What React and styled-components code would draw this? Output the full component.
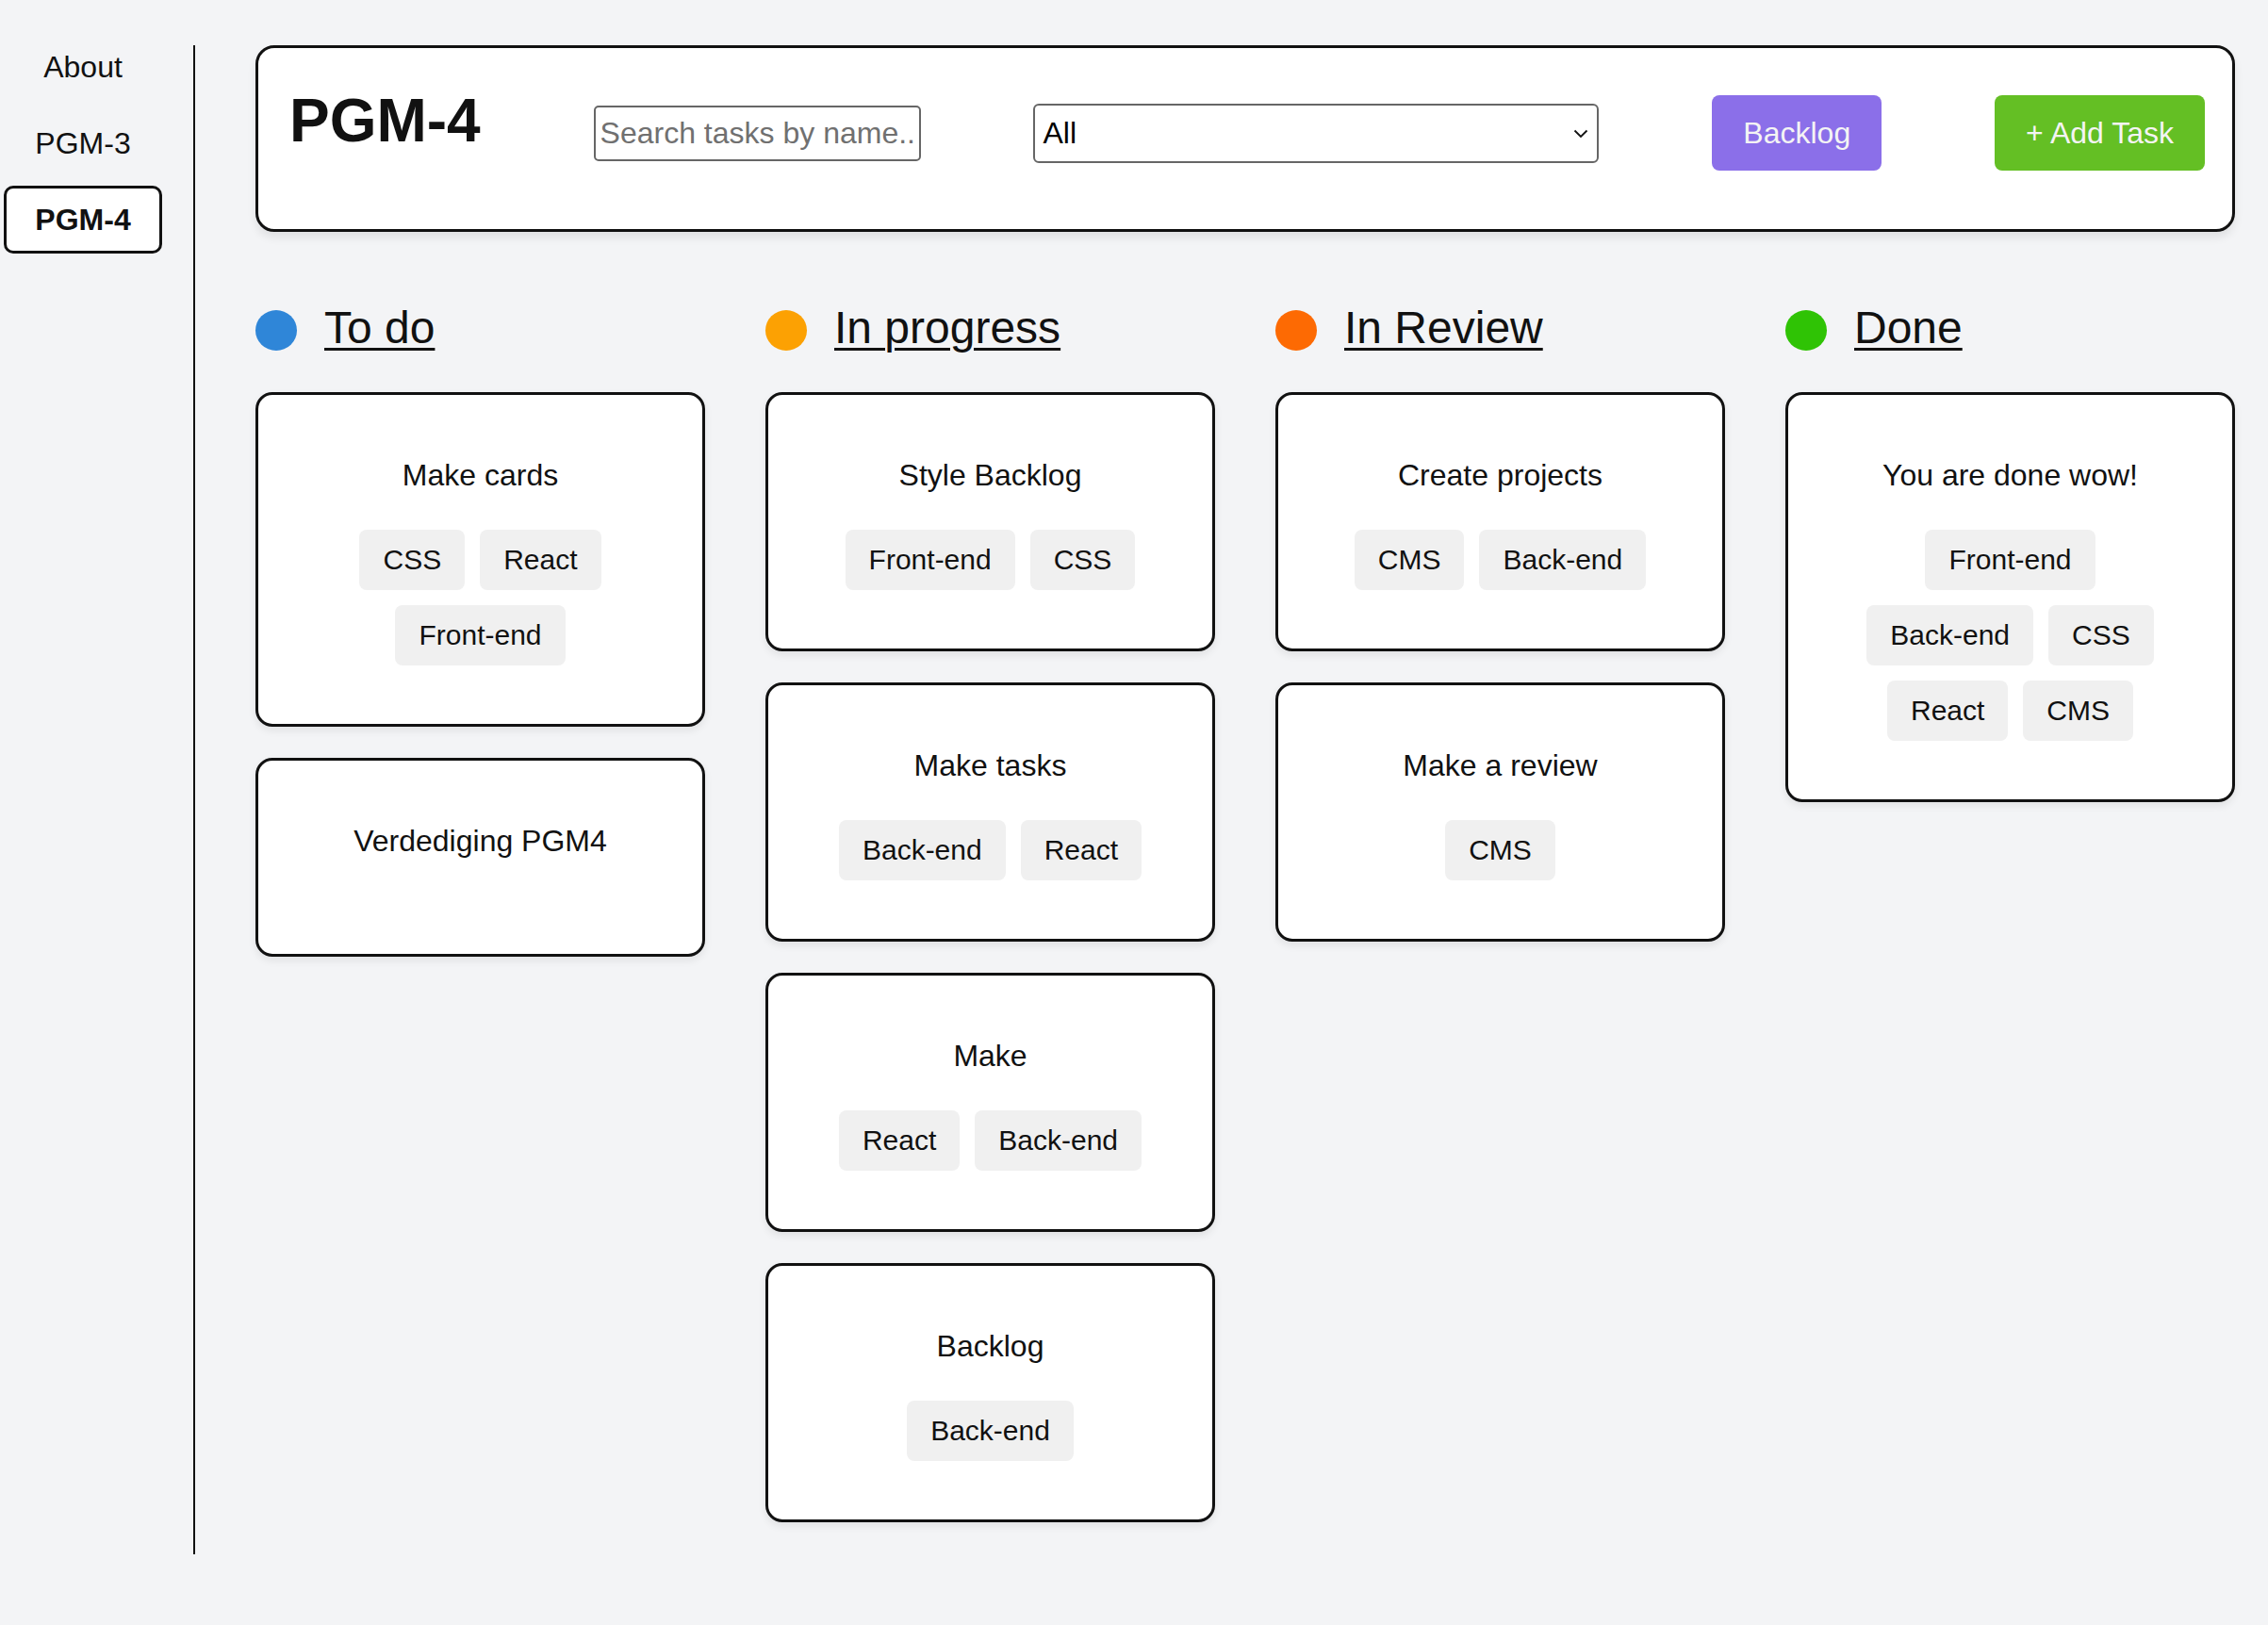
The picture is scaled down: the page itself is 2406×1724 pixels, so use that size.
import React from "react"
import styled, { createGlobalStyle } from "styled-components"

const GlobalStyle = createGlobalStyle`
  * { box-sizing: border-box; }
  body {
    margin: 0;
    background: #f3f4f6;
    color: #111;
    font-family: "Liberation Sans", Arial, sans-serif;
    font-size: 32px;
  }
`

const columns = [
  {
    title: "To do",
    color: "#2f86d8",
    tasks: [
      { name: "Make cards", tags: ["CSS", "React", "Front-end"] },
      { name: "Verdediging PGM4", tags: [] },
    ],
  },
  {
    title: "In progress",
    color: "#fca103",
    tasks: [
      { name: "Style Backlog", tags: ["Front-end", "CSS"] },
      { name: "Make tasks", tags: ["Back-end", "React"] },
      { name: "Make", tags: ["React", "Back-end"] },
      { name: "Backlog", tags: ["Back-end"] },
    ],
  },
  {
    title: "In Review",
    color: "#fd6a03",
    tasks: [
      { name: "Create projects", tags: ["CMS", "Back-end"] },
      { name: "Make a review", tags: ["CMS"] },
    ],
  },
  {
    title: "Done",
    color: "#2fc305",
    tasks: [
      { name: "You are done wow!", tags: ["Front-end", "Back-end", "CSS", "React", "CMS"] },
    ],
  },
]

const projects = ["About", "PGM-3", "PGM-4"]

export default function App() {
  return (
    <>
      <GlobalStyle />
      <Page>
        <SideNav>
          {projects.map((p) => (
            <NavItem key={p} $active={p === "PGM-4"}>{p}</NavItem>
          ))}
        </SideNav>
        <Divider />
        <Main>
          <Header>
            <Heading>PGM-4</Heading>
            <Search placeholder="Search tasks by name.." />
            <SelectWrap>
              <Select defaultValue="All">
                <option>All</option>
                <option>CSS</option>
                <option>React</option>
                <option>Front-end</option>
                <option>Back-end</option>
                <option>CMS</option>
              </Select>
              <Chevron width="16" height="10" viewBox="0 0 16 10">
                <polyline points="1.5,1.5 8,8 14.5,1.5" fill="none" stroke="#111" strokeWidth="1.8" />
              </Chevron>
            </SelectWrap>
            <Button $bg="#8b6fe9">Backlog</Button>
            <Button $bg="#64bf24">+ Add Task</Button>
          </Header>

          <Board>
            {columns.map((col) => (
              <Column key={col.title}>
                <ColumnHead>
                  <Dot $color={col.color} />
                  <ColumnTitle>{col.title}</ColumnTitle>
                </ColumnHead>
                <CardList>
                  {col.tasks.map((t) => (
                    <Card key={t.name}>
                      <CardTitle>{t.name}</CardTitle>
                      <Tags>
                        {t.tags.map((tag) => (
                          <Tag key={tag}>{tag}</Tag>
                        ))}
                      </Tags>
                    </Card>
                  ))}
                </CardList>
              </Column>
            ))}
          </Board>
        </Main>
      </Page>
    </>
  )
}

const Page = styled.div`
  display: flex;
  align-items: stretch;
  padding-top: 35px;
`

const SideNav = styled.nav`
  width: 172px;
  padding-left: 4px;
  display: flex;
  flex-direction: column;
  gap: 9px;
  flex-shrink: 0;
`

const NavItem = styled.a`
  height: 72px;
  display: flex;
  align-items: center;
  justify-content: center;
  border: 3px solid ${(p) => (p.$active ? "#111" : "transparent")};
  border-radius: 10px;
  background: ${(p) => (p.$active ? "#fff" : "transparent")};
  font-weight: ${(p) => (p.$active ? "700" : "400")};
  color: #111;
  cursor: pointer;
`

const Divider = styled.div`
  width: 2px;
  margin: 13px 0 0 33px;
  background: #111;
  flex-shrink: 0;
`

const Main = styled.main`
  flex: 1;
  margin-top: 13px;
  padding: 0 35px 34px 64px;
`

const Header = styled.header`
  height: 198px;
  display: flex;
  align-items: center;
  justify-content: space-between;
  padding: 0 29px 12px 33px;
  background: #fff;
  border: 3px solid #111;
  border-radius: 20px;
  box-shadow: 0 6px 10px rgba(0, 0, 0, 0.08);
`

const Heading = styled.h1`
  margin: 0 0 26px;
  font-size: 64px;
  font-weight: 700;
  line-height: normal;
`

const Search = styled.input`
  width: 347px;
  height: 59px;
  padding: 0 5px;
  border: 2px solid #666;
  border-radius: 5px;
  font: inherit;
  font-size: 32px;
  color: #111;
  background: #fff;
  &::placeholder { color: #707070; }
`

const SelectWrap = styled.div`
  position: relative;
  width: 600px;
  height: 63px;
`

const Select = styled.select`
  appearance: none;
  width: 100%;
  height: 100%;
  padding: 0 40px 0 8px;
  border: 2px solid #666;
  border-radius: 6px;
  background: #fff;
  font: inherit;
  font-size: 32px;
  color: #000;
`

const Chevron = styled.svg`
  position: absolute;
  right: 11px;
  top: 50%;
  transform: translateY(-40%);
  pointer-events: none;
`

const Button = styled.button`
  height: 80px;
  padding: 0 33px;
  border: none;
  border-radius: 8px;
  background: ${(p) => p.$bg};
  color: #f4f4f4;
  font: inherit;
  font-size: 32px;
  cursor: pointer;
`

const Board = styled.div`
  display: grid;
  grid-template-columns: repeat(4, 477px);
  column-gap: 64px;
  margin-top: 74px;
  align-items: start;
`

const Column = styled.section`
  display: flex;
  flex-direction: column;
`

const ColumnHead = styled.div`
  display: flex;
  align-items: center;
  gap: 29px;
`

const Dot = styled.span`
  width: 44px;
  height: 43px;
  margin-top: 6px;
  border-radius: 50%;
  background: ${(p) => p.$color};
  flex-shrink: 0;
`

const ColumnTitle = styled.h2`
  margin: 0;
  font-size: 48px;
  font-weight: 400;
  line-height: normal;
  text-decoration: underline;
  text-decoration-thickness: 3px;
  text-underline-offset: 5px;
`

const CardList = styled.div`
  display: flex;
  flex-direction: column;
  gap: 33px;
  margin-top: 41px;
`

const Card = styled.article`
  background: #fff;
  border: 3px solid #111;
  border-radius: 18px;
  padding: 67px 60px 62px;
  text-align: center;
  box-shadow: 0 4px 8px rgba(0, 0, 0, 0.08);
`

const CardTitle = styled.p`
  margin: 0 0 39px;
  font-size: 32px;
  line-height: normal;
`

const Tags = styled.div`
  display: flex;
  flex-wrap: wrap;
  justify-content: center;
  gap: 16px;
`

const Tag = styled.span`
  height: 64px;
  display: inline-flex;
  align-items: center;
  padding: 0 25px;
  border-radius: 8px;
  background: #f0f0f0;
  font-size: 30px;
`
